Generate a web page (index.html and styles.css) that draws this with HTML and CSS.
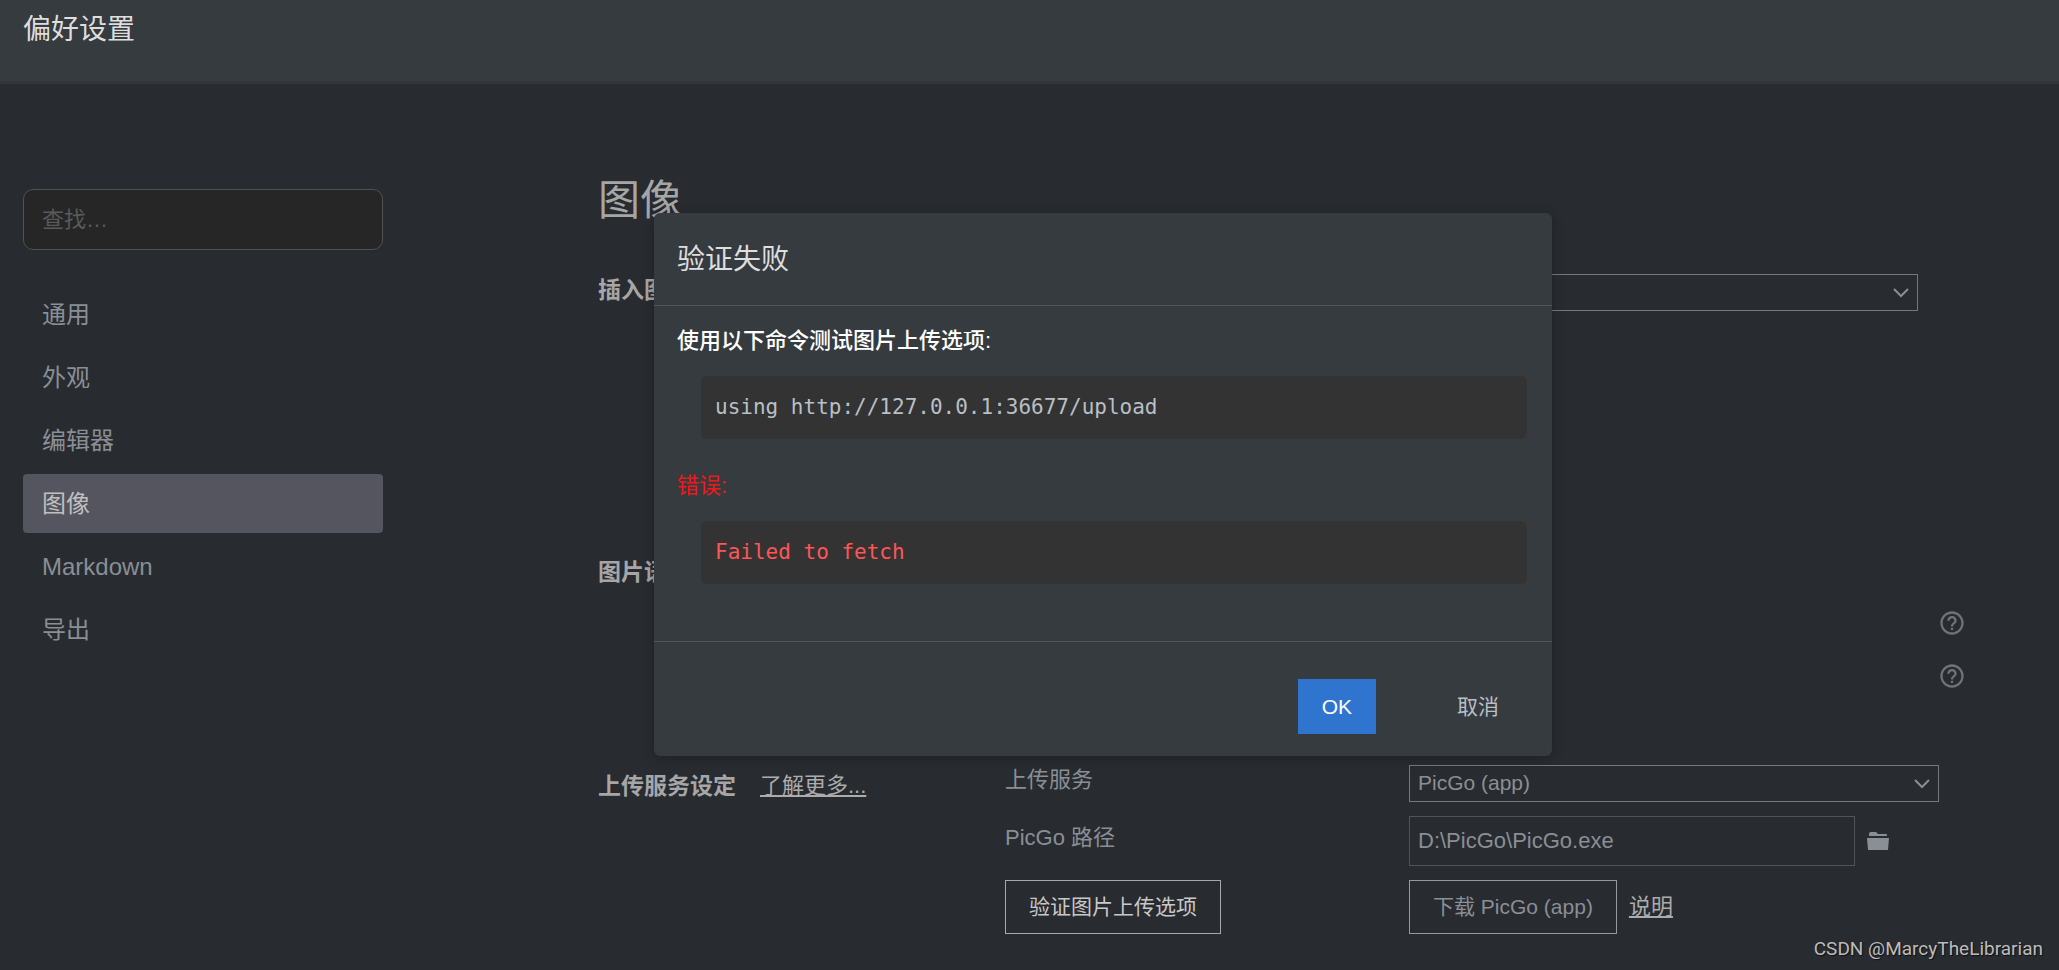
FILE: index.html
```html
<!DOCTYPE html>
<html lang="zh-CN">
<head>
<meta charset="utf-8">
<title>偏好设置</title>
<link rel="stylesheet" href="styles.css">
</head>
<body>
<header class="topbar"><h1 class="topbar-title">偏好设置</h1></header>

<div class="layout">
  <aside class="sidebar">
    <input class="search" type="search" placeholder="查找…" aria-label="查找">
    <nav class="nav">
      <a class="nav-item" href="#general">通用</a>
      <a class="nav-item" href="#appearance">外观</a>
      <a class="nav-item" href="#editor">编辑器</a>
      <a class="nav-item active" href="#image" aria-current="page">图像</a>
      <a class="nav-item" href="#markdown">Markdown</a>
      <a class="nav-item" href="#export">导出</a>
    </nav>
  </aside>

  <main class="content">
    <h2 class="page-title">图像</h2>

    <section class="group group-insert">
      <label class="group-label" for="insert-action">插入图片时</label>
      <div class="select-box select-wide">
        <select id="insert-action" class="select"><option></option></select>
        <svg class="chevron" viewBox="0 0 16 10" aria-hidden="true"><path d="M1 1l7 7 7-7"/></svg>
      </div>
    </section>

    <section class="group group-syntax">
      <h3 class="group-label">图片语法偏好</h3>
      <div class="help-list">
        <button class="help" type="button" aria-label="帮助">
          <svg viewBox="0 0 24 24" aria-hidden="true"><path d="M11 18h2v-2h-2v2zm1-16C6.480 2 2 6.480 2 12s4.480 10 10 10 10-4.480 10-10S17.520 2 12 2zm0 18c-4.410 0-8-3.590-8-8s3.590-8 8-8 8 3.590 8 8-3.590 8-8 8zm0-14c-2.210 0-4 1.790-4 4h2c0-1.100.9-2 2-2s2 .9 2 2c0 2-3 1.750-3 5h2c0-2.250 3-2.500 3-5 0-2.210-1.790-4-4-4z"/></svg>
        </button>
        <button class="help" type="button" aria-label="帮助">
          <svg viewBox="0 0 24 24" aria-hidden="true"><path d="M11 18h2v-2h-2v2zm1-16C6.480 2 2 6.480 2 12s4.480 10 10 10 10-4.480 10-10S17.520 2 12 2zm0 18c-4.410 0-8-3.590-8-8s3.590-8 8-8 8 3.590 8 8-3.590 8-8 8zm0-14c-2.210 0-4 1.790-4 4h2c0-1.100.9-2 2-2s2 .9 2 2c0 2-3 1.750-3 5h2c0-2.250 3-2.500 3-5 0-2.210-1.790-4-4-4z"/></svg>
        </button>
      </div>
    </section>

    <section class="group group-upload">
      <div class="group-head">
        <h3 class="group-label">上传服务设定</h3>
        <a class="link" href="#more">了解更多...</a>
      </div>
      <label class="field-label" for="service">上传服务</label>
      <div class="select-box">
        <select id="service" class="select"><option>PicGo (app)</option></select>
        <svg class="chevron" viewBox="0 0 16 10" aria-hidden="true"><path d="M1 1l7 7 7-7"/></svg>
      </div>
      <label class="field-label" for="path">PicGo 路径</label>
      <div class="path-row">
        <input id="path" class="path" type="text" value="D:\PicGo\PicGo.exe">
        <button class="folder" type="button" aria-label="打开文件夹">
          <svg viewBox="0 0 22 18" aria-hidden="true"><path d="M2 4V1.500L3 0h6l2 2h8.500l.5 1v1zM0 6h22l-1 12H1z"/></svg>
        </button>
      </div>
      <div><button class="button button-strong" type="button">验证图片上传选项</button></div>
      <div class="download-row">
        <button class="button" type="button">下载 PicGo (app)</button>
        <a class="link" href="#help">说明</a>
      </div>
    </section>
  </main>
</div>

<dialog class="dialog" open aria-labelledby="dialog-title">
  <h2 class="dialog-title" id="dialog-title">验证失败</h2>
  <div class="dialog-body">
    <p class="message">使用以下命令测试图片上传选项:</p>
    <pre class="code">using http://127.0.0.1:36677/upload</pre>
    <p class="message message-error">错误:</p>
    <pre class="code code-error">Failed to fetch</pre>
  </div>
  <div class="dialog-actions">
    <button class="action action-primary" type="button">OK</button>
    <button class="action" type="button">取消</button>
  </div>
</dialog>

<footer class="credit">CSDN @MarcyTheLibrarian</footer>
</body>
</html>
```
FILE: styles.css
```css
* { box-sizing: border-box; }

body {
  margin: 0;
  min-height: 100vh;
  position: relative;
  background: #282b30;
  color: #8a8f96;
  font: 22px/30px "Liberation Sans", "Noto Sans CJK SC", sans-serif;
}

h1, h2, h3, p, pre { margin: 0; font-weight: 400; }

button, input, select {
  font: inherit;
  color: inherit;
  background: none;
  border: 0;
  border-radius: 0;
  padding: 0;
  margin: 0;
}

.topbar {
  height: 84px;
  padding: 9px 23px;
  background: #363b3f;
  border-bottom: 3px solid #323639;
}

.topbar-title { font-size: 28px; line-height: 42px; color: #dedede; }

.layout {
  display: grid;
  grid-template-columns: 360px 1fr;
  column-gap: 215px;
  padding: 0 94px 0 23px;
}

.sidebar { padding-top: 105px; }

.search {
  display: block;
  width: 100%;
  height: 61px;
  padding: 0 18px;
  background: #262626;
  border: 1px solid #505152;
  border-radius: 10px;
}

.search::placeholder { color: #5a5a5a; opacity: 1; }

.nav { display: grid; gap: 4px; padding-top: 35px; }

.nav-item {
  height: 59px;
  padding: 0 19px;
  border-radius: 4px;
  color: #8a8f96;
  font-size: 24px;
  line-height: 59px;
  text-decoration: none;
}

.nav-item.active { background: #55555f; color: #bfbfbf; }

.content { padding-top: 93px; }

.page-title {
  padding-bottom: 49px;
  color: #a6a6a6;
  font-size: 42px;
  line-height: 48px;
}

.group {
  display: grid;
  grid-template-columns: 407fr 404fr 556fr;
  align-items: start;
}

.group-insert { min-height: 282px; }
.group-syntax { min-height: 209px; }
.group-upload { row-gap: 14px; align-items: center; }

.group-label {
  color: #a6a6a6;
  font-size: 23px;
  font-weight: 700;
  line-height: 32px;
}

.group-head {
  grid-row: 1 / span 3;
  align-self: start;
  display: flex;
  align-items: center;
  gap: 24px;
  padding-top: 5px;
}

.link {
  color: #acacac;
  text-decoration-thickness: 2px;
  text-underline-offset: 2px;
}

.field-label { padding-bottom: 7px; }

.select-box {
  display: grid;
  align-items: center;
  margin-right: 26px;
  font-size: 21px;
}

.select-wide { grid-column: 2 / span 2; margin-right: 47px; }

.select {
  grid-area: 1 / 1;
  appearance: none;
  width: 100%;
  height: 37px;
  padding: 0 8px 2px;
  border: 1px solid #76787b;
}

.chevron {
  grid-area: 1 / 1;
  justify-self: end;
  width: 16px;
  height: 10px;
  margin-right: 9px;
  fill: none;
  stroke: #8a8d91;
  stroke-width: 2;
  pointer-events: none;
}

.help-list {
  grid-column: 3;
  display: grid;
  gap: 25px;
  justify-content: end;
  padding-top: 53px;
}

.help { height: 28px; width: 28px; margin-right: -1px; }
.help svg { display: block; fill: #707376; }

.path-row { display: flex; align-items: center; gap: 12px; margin-right: 76px; }

.path {
  flex: 1;
  min-width: 0;
  height: 50px;
  padding: 0 8px;
  border: 1px solid #515457;
}

.folder { width: 22px; height: 18px; }
.folder svg { display: block; fill: #8a8f96; }

.download-row { display: flex; align-items: center; gap: 12px; }

.button {
  height: 54px;
  padding: 0 23px;
  border: 1px solid #96989a;
  font-size: 21px;
}

.button-strong { color: #c8c8c8; border-color: #a8a8a8; }

.dialog {
  position: absolute;
  top: 213px;
  left: 654px;
  width: 898px;
  margin: 0;
  padding: 0;
  background: #363b3f;
  border: 0;
  border-radius: 6px;
  box-shadow: 0 2px 12px rgba(0, 0, 0, 0.25);
  color: #b8bfc6;
}

.dialog-title {
  padding: 26px 23px 24px;
  border-bottom: 1px solid #53575a;
  color: #dedede;
  font-size: 28px;
  line-height: 42px;
}

.dialog-body { padding: 20px 25px 57px 23px; }

.message { color: #fff; font-weight: 500; }
.message-error { padding-top: 32px; color: #f01818; font-weight: 400; }

.code {
  margin: 20px 0 0 24px;
  padding: 16px 14px 17px;
  background: #333;
  border-radius: 6px;
  font: 21px/30px "DejaVu Sans Mono", monospace;
}

.code-error { color: #f55; }

.dialog-actions {
  display: flex;
  justify-content: flex-end;
  gap: 57px;
  padding: 37px 29px 22px;
  border-top: 1px solid #53575a;
}

.action { height: 55px; padding: 0 24px; font-size: 21px; }
.action-primary { background: #2f75d0; color: #fff; font-weight: 500; }

.credit {
  position: absolute;
  right: 16px;
  bottom: 6px;
  color: #bcbcbc;
  font-family: Roboto, sans-serif;
  font-size: 19px;
  text-shadow: 1px 1px 1px #111;
}
```
